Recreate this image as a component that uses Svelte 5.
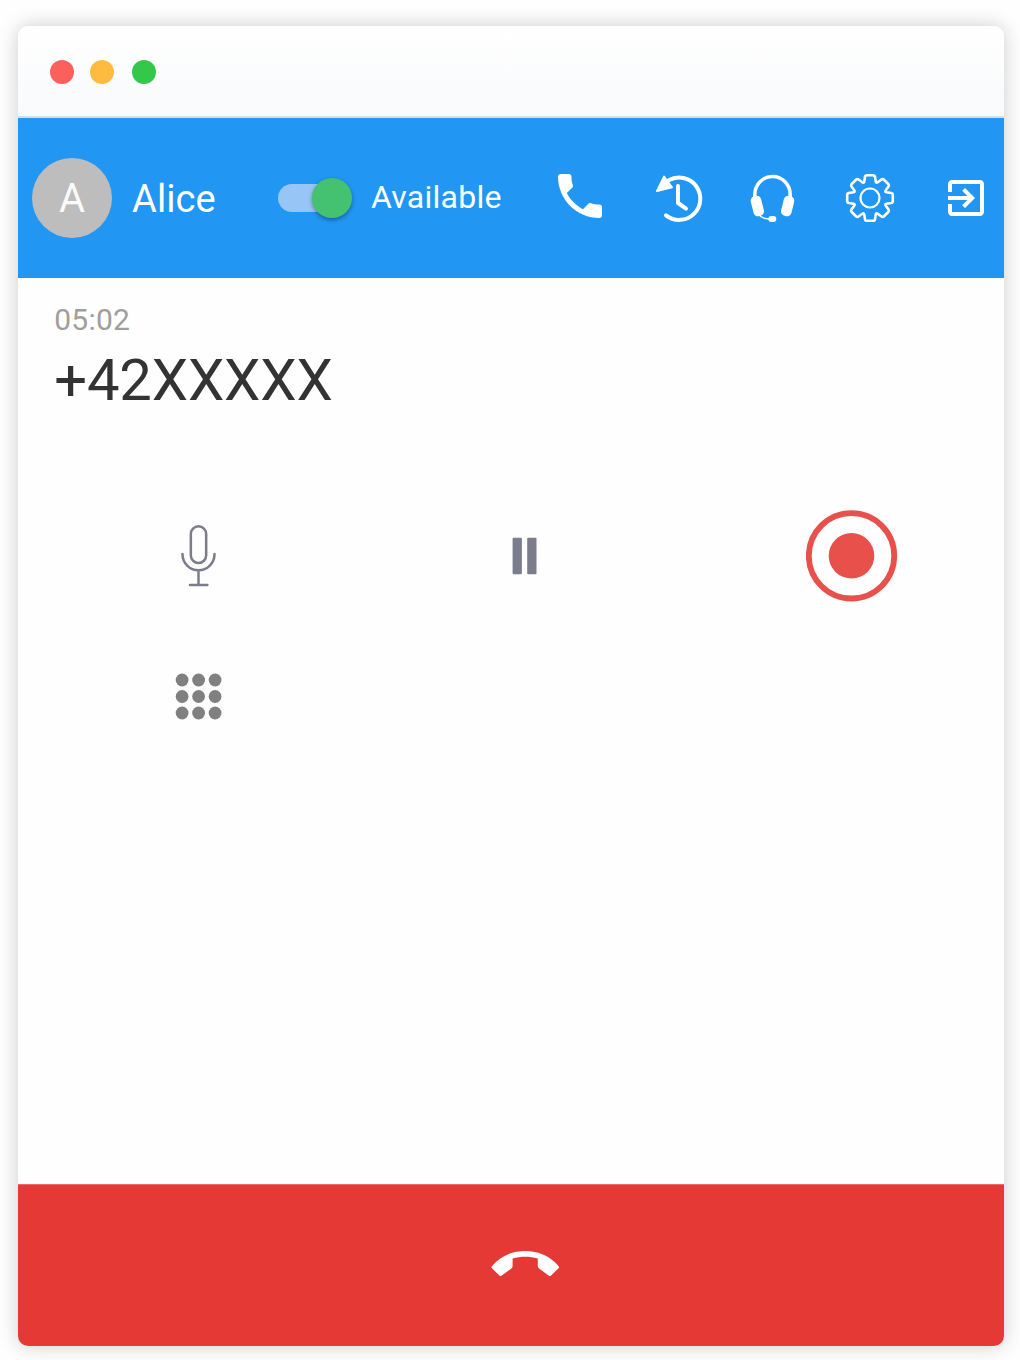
<script>
  const dots = [0, 1, 2].flatMap((r) => [0, 1, 2].map((c) => ({ x: 6.5 + c * 16.5, y: 7 + r * 16.5 })));

  // Outline of eight round-cornered teeth around the origin
  const tooth = [[-5.7, -16.6], [-5, -21.2], [-4.7, -22.8], [-3, -22.8], [3, -22.8], [4.7, -22.8], [5, -21.2], [5.7, -16.6], [6.1, -14.5], [7.7, -15.8]];
  const gear = Array.from({ length: 8 }, (_, i) => {
    const a = (i * Math.PI) / 4;
    const p = tooth.map(
      ([x, y]) =>
        `${(x * Math.cos(a) - y * Math.sin(a)).toFixed(2)},${(x * Math.sin(a) + y * Math.cos(a)).toFixed(2)}`
    );
    return `${i ? 'L' : 'M'}${p[0]}L${p[1]}Q${p[2]} ${p[3]}L${p[4]}Q${p[5]} ${p[6]}L${p[7]}Q${p[8]} ${p[9]}`;
  }).join('') + 'Z';
</script>

<main class="window">
  <div class="titlebar">
    <span class="light close"></span>
    <span class="light minimize"></span>
    <span class="light zoom"></span>
  </div>

  <header>
    <div class="avatar">A</div>
    <div class="name">Alice</div>
    <div class="switch"><span class="thumb"></span></div>
    <div class="status">Available</div>
    <svg viewBox="1.364 2.18 21.27 21.27" fill="#fff">
      <path d="M6.62 10.79c1.44 2.83 3.76 5.14 6.59 6.59l2.2-2.2c.27-.27.67-.36 1.02-.24 1.12.37 2.33.57 3.57.57.55 0 1 .45 1 1V20c0 .55-.45 1-1 1-9.39 0-17-7.61-17-17 0-.55.45-1 1-1h3.5c.55 0 1 .45 1 1 0 1.25.2 2.45.57 3.57.11.35.03.74-.25 1.02l-2.2 2.2z" />
    </svg>
    <svg viewBox="339 36 156 156" fill="none" stroke="#fff" stroke-width="12" stroke-linecap="round" stroke-linejoin="round">
      <path d="M378 166A63.5 63.5 0 1 0 386 61" />
      <path d="M414 78V129L438 146" />
      <path d="M372 50L351 93L396 82Z" fill="#fff" stroke-width="6" />
    </svg>
    <svg viewBox="48 36 156 156" fill="#fff">
      <path d="M74.5 114V102.5A52.5 52.5 0 0 1 180.5 102.5V114" fill="none" stroke="#fff" stroke-width="10.5" />
      <rect x="66" y="107" width="32" height="62" rx="14" transform="rotate(-14 82 138)" />
      <rect x="157" y="107" width="32" height="62" rx="14" transform="rotate(14 173 138)" />
      <path d="M88 164Q95 177 118 177" fill="none" stroke="#fff" stroke-width="4.5" />
      <rect x="115" y="168" width="24" height="18" rx="9" />
    </svg>
    <svg viewBox="-26 -26 52 52" fill="none" stroke="#fff" stroke-linejoin="round">
      <path d={gear} stroke-width="2.6" />
      <circle r="9.5" stroke-width="2.2" />
    </svg>
    <svg viewBox="-1 -1 26 26" fill="#fff">
      <path d="M10.09 15.59L11.5 17l5-5-5-5-1.41 1.41L12.67 11H3v2h9.67l-2.58 2.59zM19 3H5c-1.11 0-2 .9-2 2v4h2V5h14v14H5v-4H3v4c0 1.1.89 2 2 2h14c1.1 0 2-.9 2-2V5c0-1.1-.9-2-2-2z" />
    </svg>
  </header>

  <section class="call">
    <div class="timer">05:02</div>
    <div class="number">+42XXXXX</div>
    <div class="controls">
      <div class="cell">
        <svg class="mic" viewBox="60 39 111 198" fill="none" stroke="#7b7d8d" stroke-width="7.5" stroke-linecap="round">
          <rect x="92.5" y="49" width="46" height="110" rx="23" />
          <path d="M67.5 132v1a48 48 0 0 0 96 0v-1M115.5 181v44M90 225h52" />
        </svg>
      </div>
      <div class="cell">
        <svg class="pause" viewBox="0 0 26 38" fill="#7b7d8d">
          <rect x="0.6" y="0.8" width="9.3" height="36.4" rx="1" />
          <rect x="15.2" y="0.8" width="9.3" height="36.4" rx="1" />
        </svg>
      </div>
      <div class="cell">
        <svg class="record" viewBox="0 0 92 92">
          <circle cx="45.5" cy="45.8" r="42.7" fill="none" stroke="#e8504b" stroke-width="5.8" />
          <circle cx="45.5" cy="45.8" r="22.8" fill="#e8504b" />
        </svg>
      </div>
      <div class="cell">
        <svg class="dialpad" viewBox="-0.6 0 47 46" fill="#808080">
          {#each dots as d}
            <circle cx={d.x} cy={d.y} r="6.4" />
          {/each}
        </svg>
      </div>
    </div>
  </section>

  <footer>
    <svg viewBox="-0.6 0 72 28" fill="#fff">
      <path d="M2.3 16.2C11 5.5 23 .9 35.7 .9S60.5 5.5 69 16.2Q70 17.2 69 18.2L61.2 25.7Q60.3 26.5 59.3 25.7L49.8 18.7Q48.2 17.5 48.2 16V8.5C40 6.3 31 6.3 23 8.5V16Q23 17.5 21.5 18.7L11.8 25.8Q10.8 26.5 9.8 25.6L2.3 18.2Q1.3 17.2 2.3 16.2Z" />
    </svg>
  </footer>
</main>

<style>
  :global(body) {
    background: #fefefe;
  }
  .window {
    box-sizing: border-box;
    width: 986px;
    height: 1320px;
    margin: 26px 0 14px 18px;
    display: flex;
    flex-direction: column;
    border-radius: 10px;
    overflow: hidden;
    background: #fefefe;
    box-shadow: 0 0 20px rgba(0, 0, 0, 0.2);
    font-family: Roboto, sans-serif;
  }
  .titlebar {
    flex: none;
    display: flex;
    align-items: center;
    padding: 1px 32px 0;
    box-sizing: border-box;
    height: 92px;
    border-bottom: 2px solid #dadee2;
    background: linear-gradient(#fff, #f9fafc);
  }
  .light {
    width: 24px;
    height: 24px;
    border-radius: 50%;
  }
  .close {
    background: #fc605c;
  }
  .minimize {
    margin-left: 16px;
    background: #fdbc40;
  }
  .zoom {
    margin-left: 18px;
    background: #34c84a;
  }
  header {
    flex: none;
    height: 160px;
    box-sizing: border-box;
    padding-left: 14px;
    display: grid;
    grid-template-columns: 80px 166px 93px 183px 99px 93px 98px 96px 52px;
    align-items: center;
    background: #2196f3;
    color: #fff;
  }
  header svg {
    width: 52px;
    height: 52px;
    display: block;
  }
  .avatar {
    height: 80px;
    line-height: 82px;
    border-radius: 50%;
    background: #bdbdbd;
    color: #fafafa;
    font-size: 40px;
    text-align: center;
  }
  .name {
    padding: 2px 0 0 20px;
    font-size: 38px;
    letter-spacing: 0.1px;
  }
  .switch {
    width: 68px;
    height: 28px;
    border-radius: 14px;
    background: #97c5f6;
    display: flex;
    align-items: center;
  }
  .thumb {
    flex: none;
    width: 40px;
    height: 40px;
    margin-left: 34px;
    border-radius: 50%;
    background: #45c26f;
    box-shadow: 0 2px 4px rgba(0, 0, 0, 0.35);
  }
  .status {
    font-size: 32px;
    letter-spacing: 0.25px;
    padding-bottom: 2px;
  }
  .call {
    flex: 1;
    padding: 22px 17.25px 0;
  }
  .timer {
    padding-left: 19px;
    line-height: 40px;
    font-size: 30px;
    letter-spacing: 0.25px;
    color: #9e9e9e;
  }
  .number {
    padding-left: 19px;
    line-height: 80px;
    font-size: 58px;
    letter-spacing: -0.2px;
    color: #333;
  }
  .controls {
    margin-top: 66px;
    display: grid;
    grid-template-columns: repeat(3, 326.5px);
    grid-auto-rows: 140px;
  }
  .cell {
    display: flex;
    align-items: center;
    justify-content: center;
  }
  .mic {
    width: 37px;
    height: 66px;
  }
  .pause {
    width: 26px;
    height: 38px;
  }
  .record {
    width: 92px;
    height: 92px;
  }
  .dialpad {
    width: 47px;
    height: 46px;
    overflow: visible;
  }
  footer {
    flex: none;
    height: 162px;
    box-sizing: border-box;
    padding: 0 0 4px 28px;
    border-top: 1px solid #ea6a67;
    display: flex;
    align-items: center;
    justify-content: center;
    background: #e53935;
  }
  footer svg {
    width: 72px;
    height: 28px;
  }
</style>
